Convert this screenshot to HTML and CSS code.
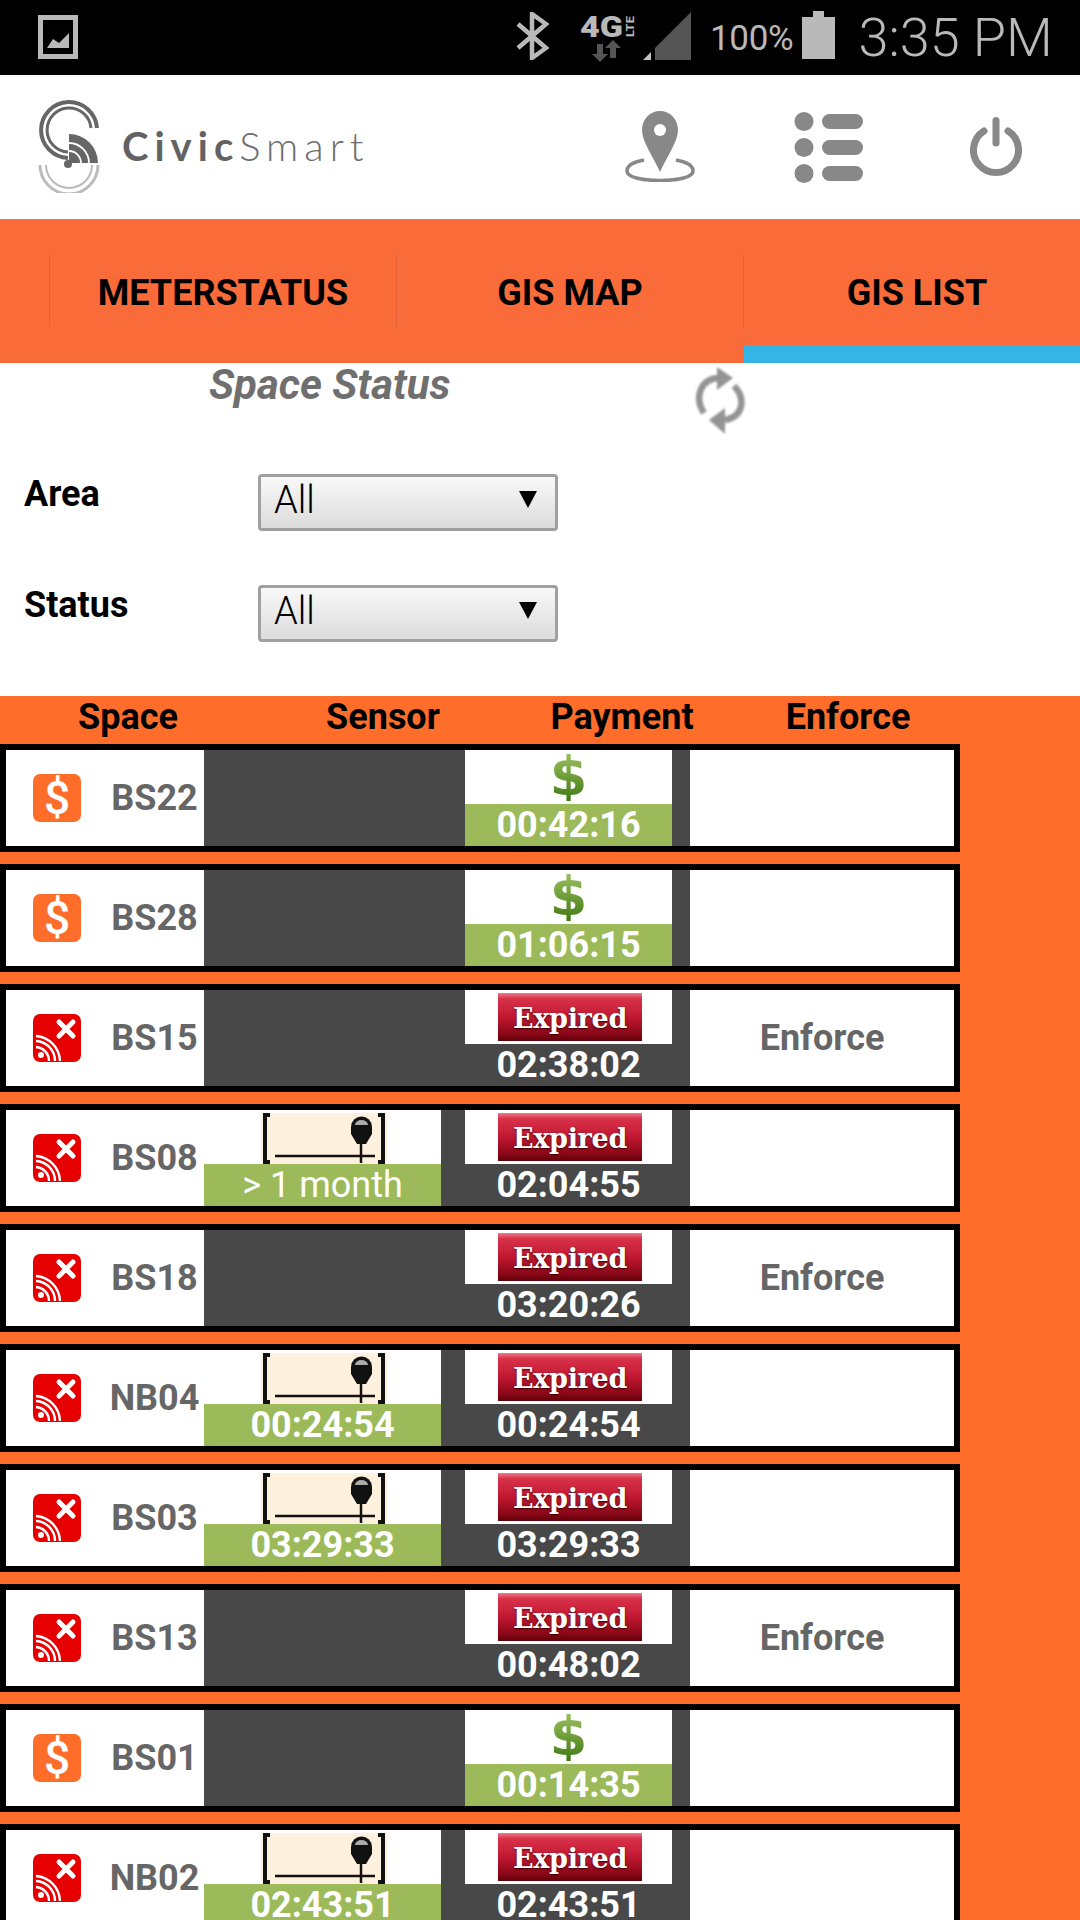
FILE: index.html
```html
<!DOCTYPE html>
<html>
<head>
    <meta charset="UTF-8">
    <title>CivicSmart - Space Status</title>
    <link rel="stylesheet" href="styles.css">
</head>
<body>
    <!-- Shared icons -->
    <svg class="sprites">
        <symbol id="icon-nosignal" viewBox="0 0 48 48">
            <path d="M26 8L40 22M40 8L26 22" fill="none" stroke="#fff" stroke-width="5" stroke-linecap="round"/>
            <circle cx="8" cy="41" r="3" fill="#fff"/>
            <path d="M3 33A14 14 0 0 1 16 47M3 27A20 20 0 0 1 22 47M3 22A26 26 0 0 1 27 47" fill="none" stroke="#fff" stroke-width="2.4"/>
        </symbol>
        <symbol id="icon-meter" viewBox="0 0 126 51">
            <rect width="126" height="51" fill="#fdf0dc"/>
            <path d="M9 2H4V49H9M117 2H122V49H117" fill="none" stroke="#111" stroke-width="4"/>
            <path d="M14 43H114M100 28V50" fill="none" stroke="#111" stroke-width="2.5"/>
            <path d="M90 14a10.500 10.500 0 0 1 21 0V21L105 31H96L90 21Z" fill="#111"/>
            <path d="M94 12a6.500 5 0 0 1 13 0Z" fill="#aaa"/>
        </symbol>
    </svg>

    <div class="statusbar">
        <svg class="sb-image" width="40" height="44" viewBox="0 0 40 44">
            <rect x="2.5" y="2.5" width="35" height="39" fill="none" stroke="#b9b9b9" stroke-width="5"/>
            <path d="M9 33L15 24L21 28L31 18V33Z" fill="#b9b9b9"/>
        </svg>
        <svg class="sb-bt" width="34" height="48" viewBox="0 0 34 48">
            <path d="M3 12L31 36L17 46V2L31 12L3 36" fill="none" stroke="#b9b9b9" stroke-width="4.5"/>
        </svg>
        <svg class="sb-net" width="54" height="46" viewBox="0 0 54 46">
            <text class="net-4g" x="0" y="21" textLength="43" lengthAdjust="spacingAndGlyphs">4G</text>
            <text class="net-lte" transform="translate(54 21) rotate(-90)" textLength="21" lengthAdjust="spacingAndGlyphs">LTE</text>
            <path d="M17 28H23V38H28L20 46L12 38H17Z" fill="#555"/>
            <path d="M33 24L41 32H36V42H30V32H25Z" fill="#555"/>
        </svg>
        <svg class="sb-signal" width="48" height="48" viewBox="0 0 48 48">
            <path d="M48 0V48H12V36Z" fill="#555"/>
            <path d="M0 48H8V40Z" fill="#c4c4c4"/>
        </svg>
        <span class="sb-pct">100%</span>
        <svg class="sb-batt" width="33" height="48" viewBox="0 0 33 48">
            <path d="M11 0H22V6H33V48H0V6H11Z" fill="#b9b9b9"/>
        </svg>
        <span class="sb-time">3:35 PM</span>
    </div>

    <div class="appbar">
        <div class="logo">
            <svg width="62" height="93" viewBox="38 100 62 93">
                <path d="M97 128A28 28 0 1 0 68 158" fill="none" stroke="#666" stroke-width="4"/>
                <path d="M91 128A22 22 0 1 0 68 152" fill="none" stroke="#666" stroke-width="3"/>
                <path d="M69 134A29 29 0 0 1 98 163H69Z" fill="#666"/>
                <path d="M69 151A12 12 0 0 1 81 163M69 143A20 20 0 0 1 89 163" fill="none" stroke="#fff" stroke-width="1.8"/>
                <circle cx="68" cy="164" r="4" fill="#666"/>
                <path d="M40 165A29 29 0 0 0 98 165" fill="none" stroke="#bbb" stroke-width="3"/>
                <path d="M46 165A23 23 0 0 0 92 165" fill="none" stroke="#bbb" stroke-width="2"/>
            </svg>
            <span class="logo-text"><b>Civic</b>Smart</span>
        </div>
        <svg class="ic-pin" width="70" height="71" viewBox="0 0 70 71">
            <path d="M35 0C25 0 17 8 17 19C17 31 29 47 35 61C41 47 53 31 53 19C53 8 45 0 35 0Z" fill="#888"/>
            <circle cx="35" cy="19" r="6" fill="#fff"/>
            <path d="M19 49C8 51 2 55 2 60C2 66 16 69.500 35 69.500C54 69.500 68 66 68 60C68 55 62 51 51 49" fill="none" stroke="#888" stroke-width="3.500"/>
        </svg>
        <svg class="ic-list" width="69" height="71" viewBox="0 0 69 71">
            <circle cx="10" cy="9.500" r="9.500" fill="#888"/>
            <circle cx="10" cy="35.500" r="9.500" fill="#888"/>
            <circle cx="10" cy="61.500" r="9.500" fill="#888"/>
            <rect x="28" y="2" width="41" height="15" rx="7.500" fill="#888"/>
            <rect x="28" y="28" width="41" height="15" rx="7.500" fill="#888"/>
            <rect x="28" y="54" width="41" height="15" rx="7.500" fill="#888"/>
        </svg>
        <svg class="ic-power" width="52" height="60" viewBox="0 0 52 60">
            <path d="M14 14A22.500 22.500 0 1 0 38 14" fill="none" stroke="#888" stroke-width="7" stroke-linecap="round"/>
            <path d="M26 3.500V26" fill="none" stroke="#888" stroke-width="7" stroke-linecap="round"/>
        </svg>
    </div>

    <div class="tabs">
        <div class="tab">METERSTATUS</div>
        <div class="tab">GIS MAP</div>
        <div class="tab tab-active">GIS LIST</div>
    </div>

    <div class="title-row">
        <h2 class="title">Space Status</h2>
        <svg class="refresh" width="50" height="69" viewBox="0 0 50 69">
            <path d="M9 47C-1 32 5 12 25 12M39 20C50 31 50 50 30 54" fill="none" stroke="#949494" stroke-width="6.500"/>
            <path d="M22 1L38 12L22 24Z" fill="#949494"/>
            <path d="M30 42L14 54L30 68Z" fill="#949494"/>
        </svg>
    </div>

    <div class="filters">
        <div class="filter">
            <label>Area</label>
            <div class="select"><span>All</span><i class="caret"></i></div>
        </div>
        <div class="filter">
            <label>Status</label>
            <div class="select"><span>All</span><i class="caret"></i></div>
        </div>
    </div>

    <div class="list">
        <div class="list-head">
            <div>Space</div>
            <div>Sensor</div>
            <div>Payment</div>
            <div>Enforce</div>
        </div>

        <div class="row">
            <div class="c-space"><span class="badge badge-paid">$</span><span class="name">BS22</span></div>
            <div class="c-sensor"></div>
            <div class="c-pay paid"><div class="pic"><span class="dollar">$</span></div><div class="time">00:42:16</div></div>
            <div class="c-enforce"></div>
        </div>

        <div class="row">
            <div class="c-space"><span class="badge badge-paid">$</span><span class="name">BS28</span></div>
            <div class="c-sensor"></div>
            <div class="c-pay paid"><div class="pic"><span class="dollar">$</span></div><div class="time">01:06:15</div></div>
            <div class="c-enforce"></div>
        </div>

        <div class="row">
            <div class="c-space"><span class="badge badge-off"><svg width="48" height="48"><use href="#icon-nosignal"/></svg></span><span class="name">BS15</span></div>
            <div class="c-sensor"></div>
            <div class="c-pay"><div class="pic"><span class="expired">Expired</span></div><div class="time">02:38:02</div></div>
            <div class="c-enforce">Enforce</div>
        </div>

        <div class="row">
            <div class="c-space"><span class="badge badge-off"><svg width="48" height="48"><use href="#icon-nosignal"/></svg></span><span class="name">BS08</span></div>
            <div class="c-sensor occupied"><div class="pic"><svg class="meter" width="126" height="51"><use href="#icon-meter"/></svg></div><div class="time time-thin">&gt; 1 month</div></div>
            <div class="c-pay"><div class="pic"><span class="expired">Expired</span></div><div class="time">02:04:55</div></div>
            <div class="c-enforce"></div>
        </div>

        <div class="row">
            <div class="c-space"><span class="badge badge-off"><svg width="48" height="48"><use href="#icon-nosignal"/></svg></span><span class="name">BS18</span></div>
            <div class="c-sensor"></div>
            <div class="c-pay"><div class="pic"><span class="expired">Expired</span></div><div class="time">03:20:26</div></div>
            <div class="c-enforce">Enforce</div>
        </div>

        <div class="row">
            <div class="c-space"><span class="badge badge-off"><svg width="48" height="48"><use href="#icon-nosignal"/></svg></span><span class="name">NB04</span></div>
            <div class="c-sensor occupied"><div class="pic"><svg class="meter" width="126" height="51"><use href="#icon-meter"/></svg></div><div class="time">00:24:54</div></div>
            <div class="c-pay"><div class="pic"><span class="expired">Expired</span></div><div class="time">00:24:54</div></div>
            <div class="c-enforce"></div>
        </div>

        <div class="row">
            <div class="c-space"><span class="badge badge-off"><svg width="48" height="48"><use href="#icon-nosignal"/></svg></span><span class="name">BS03</span></div>
            <div class="c-sensor occupied"><div class="pic"><svg class="meter" width="126" height="51"><use href="#icon-meter"/></svg></div><div class="time">03:29:33</div></div>
            <div class="c-pay"><div class="pic"><span class="expired">Expired</span></div><div class="time">03:29:33</div></div>
            <div class="c-enforce"></div>
        </div>

        <div class="row">
            <div class="c-space"><span class="badge badge-off"><svg width="48" height="48"><use href="#icon-nosignal"/></svg></span><span class="name">BS13</span></div>
            <div class="c-sensor"></div>
            <div class="c-pay"><div class="pic"><span class="expired">Expired</span></div><div class="time">00:48:02</div></div>
            <div class="c-enforce">Enforce</div>
        </div>

        <div class="row">
            <div class="c-space"><span class="badge badge-paid">$</span><span class="name">BS01</span></div>
            <div class="c-sensor"></div>
            <div class="c-pay paid"><div class="pic"><span class="dollar">$</span></div><div class="time">00:14:35</div></div>
            <div class="c-enforce"></div>
        </div>

        <div class="row">
            <div class="c-space"><span class="badge badge-off"><svg width="48" height="48"><use href="#icon-nosignal"/></svg></span><span class="name">NB02</span></div>
            <div class="c-sensor occupied"><div class="pic"><svg class="meter" width="126" height="51"><use href="#icon-meter"/></svg></div><div class="time">02:43:51</div></div>
            <div class="c-pay"><div class="pic"><span class="expired">Expired</span></div><div class="time">02:43:51</div></div>
            <div class="c-enforce"></div>
        </div>
    </div>
</body>
</html>
```

FILE: styles.css
```css
html, body {
    margin: 0;
    padding: 0;
    height: 1920px;
    overflow: hidden;
}

body {
    font-family: Roboto, 'Noto Sans', sans-serif;
    background-color: #fff;
    color: #000;
}

.sprites {
    display: none;
}

/* Status bar */
.statusbar {
    height: 75px;
    background-color: #000;
    color: #b9b9b9;
    display: flex;
    align-items: flex-start;
}

.sb-image {
    margin: 15px 0 0 38px;
}

.sb-bt {
    margin: 12px 0 0 437px;
}

.sb-net {
    margin: 16px 0 0 31px;
    overflow: visible;
}

.sb-signal {
    margin: 12px 0 0 9px;
}

.sb-pct {
    margin: 18px 0 0 19px;
    font-size: 35px;
    line-height: 41px;
    letter-spacing: -0.3px;
}

.sb-batt {
    margin: 11px 0 0 9px;
}

.sb-time {
    margin: 6px 0 0 23px;
    font-size: 54px;
    line-height: 63px;
    font-weight: 300;
    white-space: nowrap;
}

.net-4g {
    font-family: Roboto, sans-serif;
    font-weight: 900;
    font-size: 29px;
    fill: #b9b9b9;
}

.net-lte {
    font-family: Roboto, sans-serif;
    font-weight: 700;
    font-size: 10px;
    fill: #b9b9b9;
}

/* App header */
.appbar {
    height: 144px;
    display: flex;
    align-items: flex-start;
}

.logo {
    display: flex;
    align-items: flex-start;
    width: 625px;
    padding: 25px 0 0 38px;
    box-sizing: border-box;
}

.logo-text {
    margin: 24px 0 0 22px;
    font-family: Lato, sans-serif;
    font-size: 40px;
    line-height: 44px;
    font-weight: 300;
    letter-spacing: 6px;
    white-space: nowrap;
    color: #6e6e6e;
}

.logo-text b {
    font-weight: 700;
    color: #626262;
}

.ic-pin {
    margin-top: 36px;
}

.ic-list {
    margin: 37px 0 0 99px;
}

.ic-power {
    margin: 42px 0 0 107px;
}

/* Tabs */
.tabs {
    height: 144px;
    background-color: #f96c3a;
    display: flex;
    padding-left: 49px;
    overflow: hidden;
}

.tab {
    flex: 0 0 347px;
    box-sizing: border-box;
    height: 72px;
    margin-top: 36px;
    border-left: 1px solid #dd6238;
    text-align: center;
    font-size: 36px;
    font-weight: 700;
    line-height: 77px;
    position: relative;
}

.tab-active::after {
    content: "";
    position: absolute;
    left: 0;
    right: 0;
    top: 90px;
    height: 18px;
    background-color: #35b5e5;
}

/* Title and filters */
.title-row {
    height: 111px;
    display: flex;
    align-items: flex-start;
}

.title {
    margin: 0 0 0 209px;
    width: 486px;
    font-size: 42px;
    line-height: 44px;
    font-style: italic;
    font-weight: 700;
    color: #6f6f6f;
}

.refresh {
    margin-top: 3px;
    filter: blur(1px);
}

.filters {
    height: 222px;
    display: flex;
    flex-direction: column;
    gap: 54px;
}

.filter {
    display: flex;
    align-items: flex-start;
    height: 57px;
}

.filter label {
    width: 234px;
    margin-left: 24px;
    font-size: 36px;
    line-height: 40px;
    font-weight: 700;
}

.select {
    width: 300px;
    height: 57px;
    box-sizing: border-box;
    border: 3px solid #a0a0a0;
    border-radius: 4px;
    background: linear-gradient(#f8f8f8, #dcdcdc);
    display: flex;
    align-items: center;
    justify-content: space-between;
    padding: 0 18px 6px 13px;
    font-size: 38px;
    line-height: 44px;
    font-weight: 300;
}

.caret {
    width: 0;
    height: 0;
    border-left: 9px solid transparent;
    border-right: 9px solid transparent;
    border-top: 17px solid #000;
}

/* List */
.list {
    height: 1224px;
    background-color: #ff6d2b;
}

.list-head {
    height: 48px;
    display: grid;
    grid-template-columns: 256px 254px 224px 228px;
    text-align: center;
    font-size: 36px;
    font-weight: 700;
    line-height: 42px;
}

.row {
    width: 960px;
    height: 108px;
    box-sizing: border-box;
    border: 6px solid #000;
    margin-bottom: 12px;
    background-color: #484848;
    display: flex;
}

.c-space {
    width: 198px;
    background-color: #fff;
    display: flex;
    align-items: center;
    padding-left: 27px;
    box-sizing: border-box;
}

.badge {
    width: 48px;
    height: 48px;
    border-radius: 7px;
    flex: none;
    color: #fff;
    text-align: center;
}

.badge-paid {
    background-color: #ff6d2b;
    font-size: 46px;
    font-weight: 500;
    line-height: 48px;
}

.badge-off {
    background-color: #e60000;
}

.name {
    width: 97px;
    margin-left: 25px;
    text-align: center;
    font-size: 36px;
    font-weight: 700;
    color: #666;
}

.c-sensor {
    width: 237px;
}

.c-pay {
    width: 207px;
    margin-left: 24px;
}

.c-enforce {
    width: 264px;
    margin-left: 18px;
    background-color: #fff;
    text-align: center;
    font-size: 36px;
    font-weight: 700;
    line-height: 96px;
    color: #666;
}

.pic {
    height: 54px;
    background-color: #fff;
    display: flex;
    justify-content: center;
    align-items: flex-start;
    padding: 3px 0 0 3px;
    box-sizing: border-box;
}

.meter {
    filter: blur(0.4px);
}

.time {
    height: 42px;
    text-align: center;
    font-size: 36px;
    font-weight: 700;
    line-height: 42px;
    color: #fff;
}

.time-thin {
    font-weight: 400;
}

.paid .time,
.occupied .time {
    background-color: #9cba5a;
}

.dollar {
    margin-left: -3px;
    font-family: 'DejaVu Sans', sans-serif;
    font-size: 54px;
    font-weight: 700;
    line-height: 48px;
    background: linear-gradient(#9cc060, #3f7a12);
    -webkit-background-clip: text;
    background-clip: text;
    color: transparent;
}

.expired {
    width: 144px;
    height: 48px;
    background: linear-gradient(#f07a85 0, #d8324a 12%, #c01830 50%, #8a0818 85%, #600008 100%);
    color: #fff;
    font-family: 'DejaVu Serif', serif;
    font-size: 27px;
    font-weight: 700;
    line-height: 51px;
    text-align: center;
    letter-spacing: -0.3px;
    text-shadow: 0 1px 2px #300;
}
```
